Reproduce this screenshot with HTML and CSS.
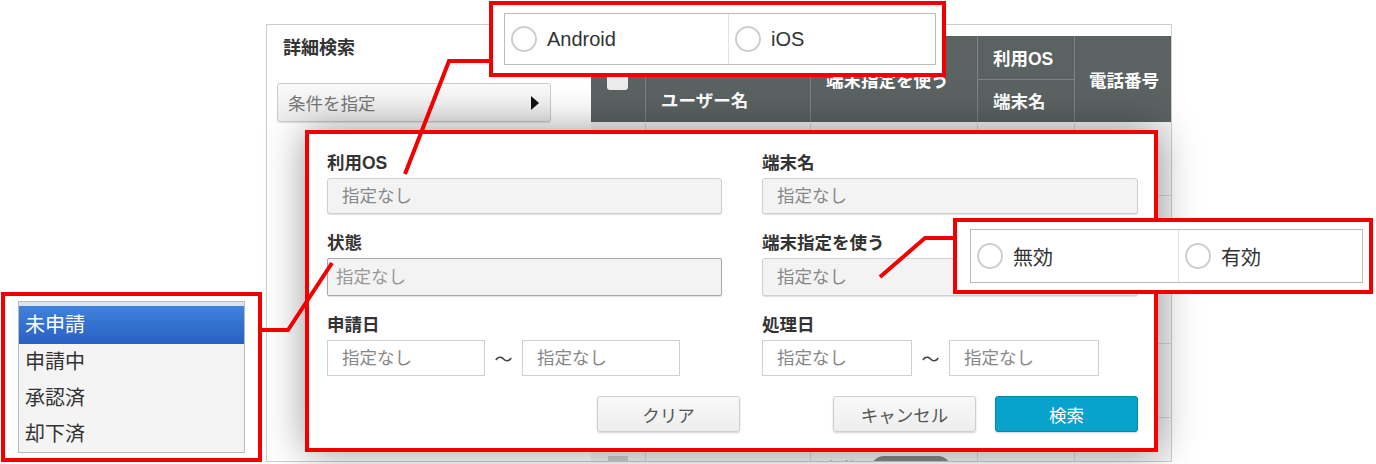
FILE: index.html
```html
<!DOCTYPE html>
<html lang="ja">
<head>
    <meta charset="UTF-8">
    <meta name="viewport" content="width=device-width, initial-scale=1.0">
    <title>詳細検索</title>
    <link rel="stylesheet" href="styles.css">
</head>
<body>
<div class="screen">
    <div class="panel">
        <div class="sidebar">
            <h2 class="side-title">詳細検索</h2>
            <button class="cond-button">条件を指定<span class="arrow"></span></button>
        </div>
        <div class="list-area">
            <div class="list-head">
                <div class="head-cell check-cell"><span class="check"></span></div>
                <div class="head-cell user-cell">ユーザー名</div>
                <div class="head-cell use-cell">端末指定を使う</div>
                <div class="head-cell os-cell">
                    <div class="sub sub-top">利用OS</div>
                    <div class="sub">端末名</div>
                </div>
                <div class="head-cell tel-cell">電話番号</div>
            </div>
            <div class="list-row"><div></div><div></div><div></div><div></div><div></div></div>
            <div class="list-row"><div></div><div></div><div></div><div></div><div></div></div>
            <div class="list-row"><div></div><div></div><div></div><div></div><div></div></div>
            <div class="list-row"><div></div><div></div><div></div><div></div><div></div></div>
            <div class="list-row last-row">
                <div><span class="row-check"></span></div>
                <div class="row-name">サイバーあたる</div>
                <div class="row-use"><span class="muted">無効</span><span class="toggle"></span></div>
                <div></div>
                <div></div>
            </div>
        </div>
    </div>

    <!-- 検索条件ダイアログ -->
    <div class="modal">
        <div class="form-grid">
            <div class="field">
                <label class="field-label">利用OS</label>
                <div class="select">指定なし</div>
            </div>
            <div class="field">
                <label class="field-label">端末名</label>
                <div class="select">指定なし</div>
            </div>
            <div class="field">
                <label class="field-label">状態</label>
                <div class="select select-open">指定なし</div>
            </div>
            <div class="field">
                <label class="field-label">端末指定を使う</label>
                <div class="select select-tall">指定なし</div>
            </div>
            <div class="field">
                <label class="field-label">申請日</label>
                <div class="date-range">
                    <input class="date-input wide" type="text" placeholder="指定なし">
                    <span class="tilde">〜</span>
                    <input class="date-input wide" type="text" placeholder="指定なし">
                </div>
            </div>
            <div class="field">
                <label class="field-label">処理日</label>
                <div class="date-range">
                    <input class="date-input" type="text" placeholder="指定なし">
                    <span class="tilde">〜</span>
                    <input class="date-input" type="text" placeholder="指定なし">
                </div>
            </div>
        </div>
        <div class="actions">
            <button class="btn btn-clear">クリア</button>
            <button class="btn btn-cancel">キャンセル</button>
            <button class="btn btn-search">検索</button>
        </div>
    </div>

    <!-- 注釈の引き出し線 -->
    <svg class="leaders" width="1376" height="464" viewBox="0 0 1376 464">
        <polyline points="491,61 449,61 405,174" />
        <polyline points="955,238 925,238 880,277" />
        <polyline points="260,330 288,330 332,263" />
    </svg>

    <div class="callout callout-os">
        <div class="radio-group">
            <div class="radio-item os-first"><span class="radio"></span>Android</div>
            <div class="radio-item"><span class="radio"></span>iOS</div>
        </div>
    </div>

    <div class="callout callout-use">
        <div class="radio-group">
            <div class="radio-item use-first"><span class="radio"></span>無効</div>
            <div class="radio-item"><span class="radio"></span>有効</div>
        </div>
    </div>

    <div class="callout callout-status">
        <ul class="status-list">
            <li class="selected">未申請</li>
            <li>申請中</li>
            <li>承認済</li>
            <li>却下済</li>
        </ul>
    </div>
</div>
</body>
</html>
```

FILE: styles.css
```css
body {
    margin: 0;
    font-family: "Liberation Sans", "Noto Sans CJK JP", sans-serif;
    color: #333;
    background: #fff;
}
.screen {
    position: relative;
    width: 1376px;
    height: 464px;
    overflow: hidden;
    padding: 24px 0 0 266px;
    box-sizing: border-box;
}

/* 背景の一覧画面 */
.panel {
    width: 906px;
    height: 438px;
    border: 1px solid #ccc;
    box-sizing: border-box;
    display: flex;
    overflow: hidden;
}
.sidebar {
    width: 324px;
    padding: 11px 0 0 10px;
    box-sizing: border-box;
}
.side-title {
    margin: 0;
    padding-left: 6px;
    font-size: 18px;
    line-height: 24px;
    font-weight: bold;
}
.cond-button {
    margin-top: 23px;
    width: 274px;
    height: 39px;
    display: flex;
    align-items: center;
    justify-content: space-between;
    padding: 0 10px;
    font: inherit;
    font-size: 17.5px;
    color: #777;
    background: linear-gradient(#fafafa, #ececec);
    border: 1px solid #ccc;
    border-radius: 3px;
    box-shadow: 0 1px 1px rgba(0, 0, 0, 0.12);
}
.arrow {
    width: 0;
    height: 0;
    border-top: 7px solid transparent;
    border-bottom: 7px solid transparent;
    border-left: 8px solid #111;
    margin-right: 1px;
}
.list-area {
    flex: 1;
    padding-top: 11px;
}
.list-head {
    display: grid;
    grid-template-columns: 54px 165px 167px 97px 97px;
    height: 86px;
    background: #5b6262;
    color: #fff;
    font-weight: bold;
    font-size: 17.5px;
}
.head-cell {
    display: flex;
    align-items: center;
    padding-left: 15px;
    border-left: 1px solid #7c8383;
    box-sizing: border-box;
}
.check-cell {
    border-left: none;
    padding-left: 16px;
}
.check {
    width: 21px;
    height: 22px;
    background: #ececec;
    border-radius: 3px;
}
.user-cell {
    align-items: flex-end;
    padding-bottom: 10px;
}
.os-cell {
    flex-direction: column;
    align-items: stretch;
    padding-left: 0;
}
.sub {
    flex: 1;
    display: flex;
    align-items: center;
    padding-left: 15px;
}
.sub-top {
    border-bottom: 1px solid #7c8383;
}
.tel-cell {
    padding-left: 14px;
}
.list-row {
    display: grid;
    grid-template-columns: 54px 165px 167px 97px 97px;
    height: 73px;
    background: #f4f4f4;
    border-bottom: 1px solid #d8d8d8;
}
.list-row > div {
    border-left: 1px solid #d8d8d8;
}
.list-row > div:first-child {
    border-left: none;
}
.last-row > div {
    padding-top: 38px;
    box-sizing: border-box;
}
.row-check {
    display: block;
    width: 20px;
    height: 22px;
    margin-left: 17px;
    background: #d0d0d0;
}
.row-name {
    padding-left: 15px;
    font-size: 17.5px;
}
.row-use {
    display: flex;
    gap: 14px;
    padding-left: 16px;
    font-size: 15px;
}
.muted {
    color: #888;
}
.toggle {
    width: 80px;
    height: 26px;
    border-radius: 13px;
    background: #888;
}

/* 検索条件ダイアログ */
.modal {
    position: absolute;
    left: 305px;
    top: 130px;
    width: 853px;
    height: 322px;
    box-sizing: border-box;
    border: 4px solid #f20000;
    background: #fff;
    padding: 18px 16px 0 18px;
    box-shadow: 0 0 38px rgba(0, 0, 0, 0.4);
}
.form-grid {
    display: grid;
    grid-template-columns: 395px 376px;
    column-gap: 40px;
    row-gap: 18px;
}
.field-label {
    display: block;
    font-size: 17.5px;
    line-height: 22px;
    font-weight: bold;
    margin-bottom: 4px;
}
.select {
    height: 36px;
    line-height: 34px;
    box-sizing: border-box;
    padding-left: 14px;
    background: #f3f3f3;
    border: 1px solid #d0d0d0;
    border-radius: 3px;
    box-shadow: 0 1px 1px rgba(0, 0, 0, 0.12);
    color: #888;
    font-size: 17.5px;
}
.select-open {
    height: 38px;
    line-height: 36px;
    padding-left: 8px;
    border-color: #a8a8a8;
    border-radius: 2px;
    color: #999;
}
.select-tall {
    height: 38px;
    line-height: 36px;
}
.date-range {
    display: flex;
    align-items: center;
}
.date-input {
    width: 150px;
    height: 36px;
    box-sizing: border-box;
    padding: 0 0 0 14px;
    border: 1px solid #d0d0d0;
    background: #fff;
    font: inherit;
    font-size: 17.5px;
    color: #333;
}
.date-input.wide {
    width: 158px;
}
.date-input::placeholder {
    color: #888;
}
.tilde {
    width: 37px;
    text-align: center;
    font-size: 18px;
    color: #444;
}
.actions {
    display: flex;
    justify-content: flex-end;
    margin-top: 20px;
}
.btn {
    width: 143px;
    height: 36px;
    font: inherit;
    font-size: 17.5px;
    color: #555;
    background: linear-gradient(#f8f8f8, #eeeeee);
    border: 1px solid #cfcfcf;
    border-radius: 3px;
    box-shadow: 0 1px 2px rgba(0, 0, 0, 0.18);
}
.btn-clear {
    margin-right: 93px;
}
.btn-cancel {
    margin-right: 19px;
}
.btn-search {
    color: #fff;
    background: #07a3cc;
    border-color: #0688aa;
}

/* 注釈 */
.leaders {
    position: absolute;
    left: 0;
    top: 0;
}
.leaders polyline {
    fill: none;
    stroke: #f20000;
    stroke-width: 4;
}
.callout {
    position: absolute;
    box-sizing: border-box;
    border: 4px solid #f20000;
    background: #fff;
}
.callout-os {
    left: 489px;
    top: 1px;
    width: 457px;
    height: 76px;
    padding: 8px 6px 8px 11px;
}
.callout-use {
    left: 953px;
    top: 218px;
    width: 420px;
    height: 76px;
    padding: 7px 6px 7px 13px;
}
.callout-status {
    left: 1px;
    top: 292px;
    width: 261px;
    height: 170px;
    padding: 5px 13px;
}
.radio-group {
    display: flex;
    height: 100%;
    border: 1px solid #bbb;
    box-sizing: border-box;
}
.radio-item {
    flex: 1;
    display: flex;
    align-items: center;
    gap: 10px;
    padding-left: 6px;
    font-size: 20px;
    color: #333;
}
.os-first {
    flex: none;
    width: 217px;
    border-right: 1px solid #e2e2e2;
}
.use-first {
    flex: none;
    width: 201px;
    border-right: 1px solid #e2e2e2;
}
.radio {
    width: 26px;
    height: 26px;
    box-sizing: border-box;
    border: 2px solid #cfcfcf;
    border-radius: 50%;
}
.status-list {
    margin: 0;
    padding: 0;
    list-style: none;
    height: 152px;
    box-sizing: border-box;
    border: 1px solid #bbb;
    background: #f4f4f4;
    font-size: 20px;
}
.status-list li {
    height: 36px;
    line-height: 36px;
    padding-left: 6px;
}
.status-list .selected {
    height: 42px;
    line-height: 38px;
    border-top: 4px solid #d9e6f6;
    box-sizing: border-box;
    color: #fff;
    background: linear-gradient(#3f82dc, #2a60c2);
}
```
